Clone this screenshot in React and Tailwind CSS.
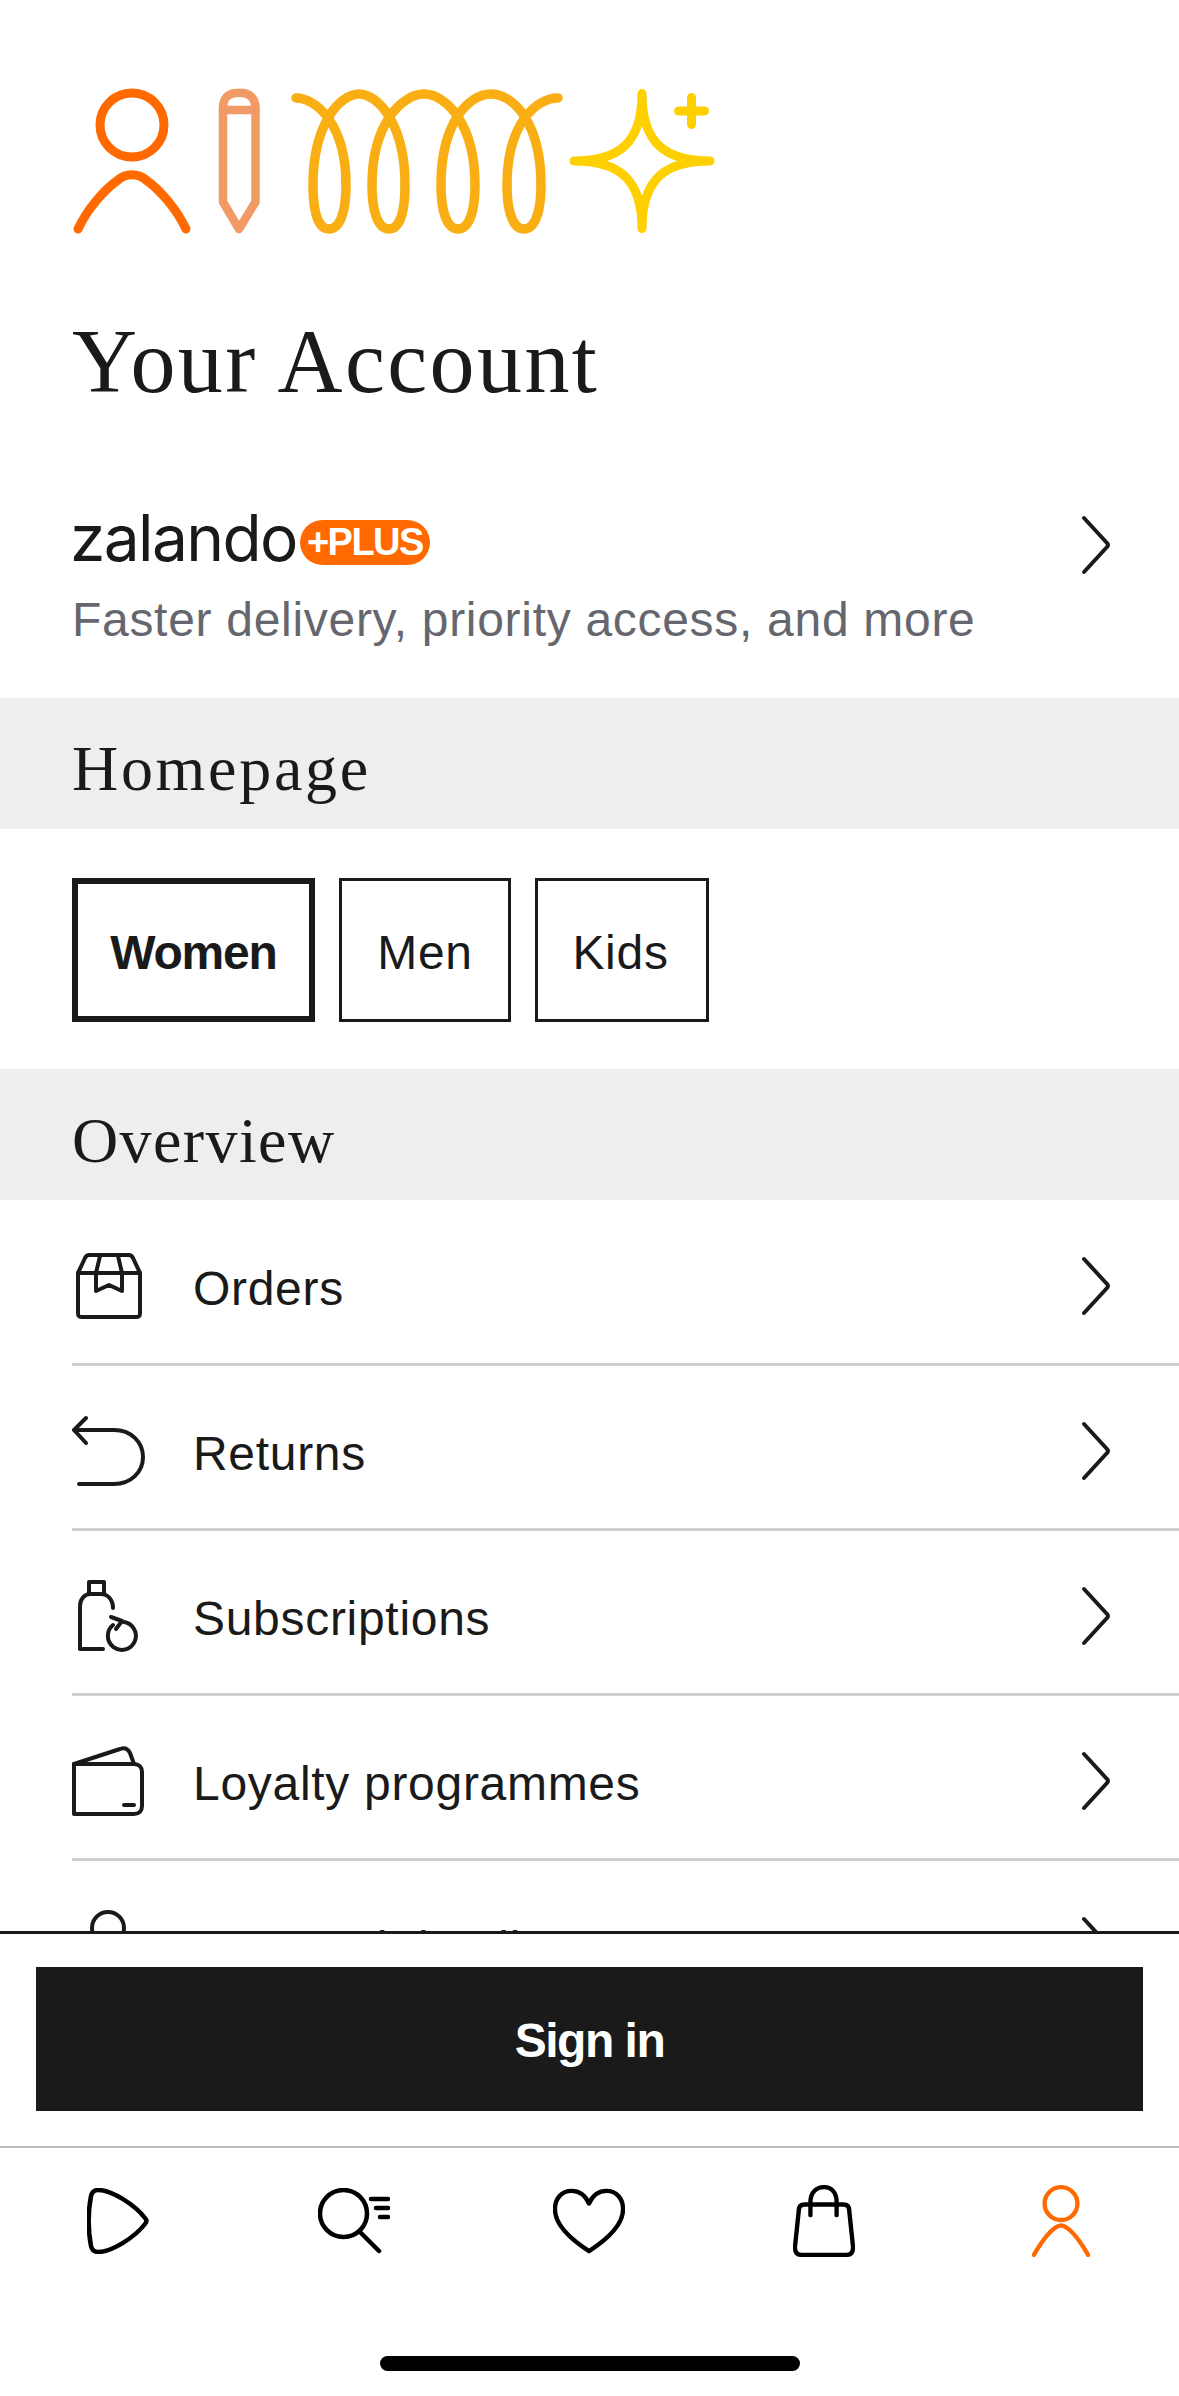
const SANS = 'font-["Liberation_Sans",Arial,sans-serif]';

// Multicolour banner above the title.
const AccountBanner = () => (
  <svg viewBox="0 0 660 160" className="w-[660px] h-[160px] block" fill="none" strokeLinecap="round" strokeLinejoin="round">
    <g stroke="#ff6900" strokeWidth="9">
      <circle cx="60" cy="45" r="32" />
      <path d="M6 149 C16 128 32 110 46 100 C54 93 66 93 74 100 C88 110 104 128 114 149" />
    </g>
    <g stroke="#f29a66" strokeWidth="8.5">
      <path d="M151 28 C151 19 156 13 164 13 L170 13 C178 13 183.500 19 183.500 28 L183.500 122 L167 149 L151 122 Z" />
      <path d="M151 30 L183.500 30" />
    </g>
    <path
      stroke="#f9ae13"
      strokeWidth="9.5"
      d="M224 18 C244 18 274 44 274 105 C274 132 268 149 257 149 C246 149 241 132 241 105 C241 44 268 14 287 14 C306 14 333 44 333 105 C333 132 328 149 317 149 C306 149 300 132 300 105 C300 44 330 14 352 14 C374 14 403 44 403 105 C403 132 397 149 386 149 C375 149 369 132 369 105 C369 44 396 14 419 14 C442 14 469 44 469 105 C469 132 463 149 452 149 C441 149 435 132 435 105 C435 44 464 18 486 18"
    />
    <g stroke="#ffd000" strokeWidth="9">
      <path d="M570 13.500 C570 64 546 81 502 81 C546 81 570 98 570 148.500 C570 98 594 81 638 81 C594 81 570 64 570 13.500 Z" />
      <path d="M619.500 17.500 L619.500 44.500 M606.500 31 L632.500 31" />
    </g>
  </svg>
);

const OrdersIcon = () => (
  <svg viewBox="0 0 66 66" className="w-[66px] h-[66px] ml-[4px]" fill="none" stroke="#1a1a1a" strokeWidth="4" strokeLinecap="round" strokeLinejoin="round">
    <path d="M2 20 L9 5 C10 3 11 2 13 2 L53 2 C55 2 56 3 57 5 L64 20 L64 60 C64 63 63 64 60 64 L6 64 C3 64 2 63 2 60 Z" />
    <path d="M2 20 L64 20 M24 3 L20 20 L20 38 L33 32 L46 38 L46 20 L42 3" />
  </svg>
);

const ReturnsIcon = () => (
  <svg viewBox="0 0 74 72" className="w-[74px] h-[72px]" fill="none" stroke="#1a1a1a" strokeWidth="4" strokeLinecap="round" strokeLinejoin="round">
    <path d="M14 3 L2 15 L14 28 M2 15 L42 15 C59 15 71 27 71 42 C71 57 59 69 42 69 L7 69" />
  </svg>
);

const SubscriptionsIcon = () => (
  <svg viewBox="0 0 62 72" className="w-[62px] h-[72px] ml-[5px]" fill="none" stroke="#1a1a1a" strokeWidth="4" strokeLinecap="round" strokeLinejoin="round">
    <path d="M12 14 L12 2 L27 2 L27 14 M36 28 C36 20 31 14 24 14 L13 14 C7 14 3 20 3 26 L3 69 L26 69" />
    <path d="M47 42 A14 14 0 1 1 36 45" />
    <path d="M34 37 L45 41 L39 49" />
  </svg>
);

const LoyaltyIcon = () => (
  <svg viewBox="0 0 72 70" className="w-[72px] h-[70px]" fill="none" stroke="#1a1a1a" strokeWidth="4" strokeLinecap="round" strokeLinejoin="round">
    <path d="M2 18 L2 68 L62 68 C67 68 70 65 70 60 L70 26 C70 21 67 18 62 18 Z" />
    <path d="M2 18 L48 3 C53 1 56 3 58 7 L62 18 M52 59 L62 59" />
  </svg>
);

const PersonIcon = () => (
  <svg viewBox="0 0 72 72" className="w-[72px] h-[72px]" fill="none" stroke="#1a1a1a" strokeWidth="4" strokeLinecap="round" strokeLinejoin="round">
    <circle cx="36" cy="18" r="16" />
    <path d="M4 70 C10 55 22 42 36 42 C50 42 62 55 68 70" />
  </svg>
);

const rows = [
  { label: 'Orders', Icon: OrdersIcon },
  { label: 'Returns', Icon: ReturnsIcon },
  { label: 'Subscriptions', Icon: SubscriptionsIcon },
  { label: 'Loyalty programmes', Icon: LoyaltyIcon },
  { label: 'Personal details', Icon: PersonIcon },
];

const Chevron = () => (
  <svg viewBox="0 0 32 60" className="w-[32px] h-[60px] shrink-0" fill="none" stroke="#1a1a1a" strokeWidth="4" strokeLinecap="round" strokeLinejoin="round">
    <path d="M4 3 L27 28 Q29 30 27 32 L4 57" />
  </svg>
);

const SectionHeader = ({ children, className }) => (
  <div className={`h-[131px] bg-[#eeeeee] pl-[72px] flex items-center font-["Liberation_Serif",serif] text-[64px] text-[#1a1a1a] ${className}`}>
    {children}
  </div>
);

const TabButton = ({ label, className }) => (
  <button className={`h-[144px] pt-[5px] border-[#1a1a1a] text-[48px] text-[#1a1a1a] ${className}`}>{label}</button>
);

const NavBar = () => (
  <nav className="h-[248px] relative">
    <div className="grid grid-cols-5 h-[146px] items-center justify-items-center">
      <svg viewBox="0 0 62 66" className="w-[62px] h-[66px]" fill="none" stroke="#000" strokeWidth="4.5" strokeLinejoin="round">
        <path d="M11 2 C25 2 48 17 58 30 C60 32 60 34 58 36 C48 49 25 64 11 64 C7 64 5 62 4 58 C1 42 1 24 4 8 C5 4 7 2 11 2 Z" />
      </svg>
      <svg viewBox="0 0 72 66" className="w-[72px] h-[66px]" fill="none" stroke="#000" strokeWidth="4.5" strokeLinecap="round">
        <circle cx="25.500" cy="25.500" r="23.500" />
        <path d="M42 44 L61 63 M53 11 L70 11 M58 20 L70 20 M62 29 L70 29" />
      </svg>
      <svg viewBox="0 0 74 66" className="w-[72px] h-[66px]" fill="none" stroke="#000" strokeWidth="4.5" strokeLinejoin="round">
        <path d="M37 15 C33 6 26 2 19 2 C9 2 2 10 2 21 C2 37 20 53 37 64 C54 53 72 37 72 21 C72 10 65 2 55 2 C48 2 41 6 37 15 Z" />
      </svg>
      <svg viewBox="0 0 64 74" className="w-[62px] h-[72px] mr-[2px]" fill="none" stroke="#000" strokeWidth="4.5" strokeLinecap="round" strokeLinejoin="round">
        <path d="M12 20 L52 20 C56 20 58 22 58 26 L62 64 C62 69 60 72 55 72 L9 72 C4 72 2 69 2 64 L6 26 C6 22 8 20 12 20 Z" />
        <path d="M18 31 L18 17 C18 8 24 2 32 2 C40 2 45 8 45 17 L45 31" />
      </svg>
      <svg viewBox="0 0 60 74" className="w-[58px] h-[72px]" fill="none" stroke="#ff6900" strokeWidth="4.5" strokeLinecap="round">
        <circle cx="30" cy="19" r="17" />
        <path d="M2 72 C9 60 18 48 24 44 C28 41 32 41 36 44 C42 48 51 60 58 72" />
      </svg>
    </div>
    <div className="absolute left-[380px] top-[208px] w-[420px] h-[15px] rounded-full bg-black" />
  </nav>
);

export default function App() {
  return (
    <div className={`${SANS} w-[1179px] h-[2396px] bg-white flex flex-col overflow-hidden text-[#1a1a1a] tracking-[0.7px]`}>
      <main className="flex-1 min-h-0 overflow-hidden">
        <div className="pt-[80px] pl-[72px]">
          <AccountBanner />
        </div>
        <h1 className='pl-[72px] mt-[72px] font-["Liberation_Serif",serif] text-[90px] leading-[100px] tracking-[2.4px]'>
          Your Account
        </h1>

        <div className="mt-[96px] pl-[72px] pr-[67px] flex items-start justify-between">
          <div>
            <div className="flex items-center h-[60px]">
              <span className="ml-[-2px] font-['Inter',sans-serif] text-[64px] tracking-[-1.6px] leading-[60px]">zalando</span>
              <span className="ml-[3px] mt-[8px] h-[45px] w-[130px] rounded-full bg-[#ff6900] text-white font-bold text-[38px] leading-[45px] text-center tracking-[-1.5px]">
                +PLUS
              </span>
            </div>
            <p className="mt-[24px] text-[48px] leading-[56px] text-[#66676e]">Faster delivery, priority access, and more</p>
          </div>
          <div className="mt-[7px]">
            <Chevron />
          </div>
        </div>

        <div className="mt-[50px]">
          <SectionHeader className="pt-[10px] tracking-[2.7px]">Homepage</SectionHeader>
        </div>
        <div className="pt-[49px] pb-[47px] pl-[72px] flex gap-[24px]">
          <TabButton label="Women" className="w-[243px] border-[6px] font-bold tracking-[-1.2px]" />
          <TabButton label="Men" className="w-[172px] border-[3px]" />
          <TabButton label="Kids" className="w-[174px] border-[3px] pr-[3px]" />
        </div>
        <SectionHeader className="pt-[12px] tracking-[1.4px]">Overview</SectionHeader>

        <ul className="pl-[72px] pt-[1px]">
          {rows.map(({ label, Icon }) => (
            <li key={label} className="h-[165px] pt-[8px] border-b-[3px] border-[#cfcfcf] flex items-center">
              <div className="w-[121px] shrink-0">
                <Icon />
              </div>
              <span className="flex-1 pt-[5px] text-[48px]">{label}</span>
              <div className="pr-[67px]">
                <Chevron />
              </div>
            </li>
          ))}
        </ul>
      </main>

      <footer className="shrink-0 bg-white">
        <div className="border-t-[3px] border-[#1a1a1a] h-[215px] px-[36px] pt-[33px]">
          <button className="w-full h-[144px] pt-[4px] bg-[#1a1a1a] text-white font-bold text-[48px] tracking-[-1.5px]">Sign in</button>
        </div>
        <div className="border-t-[2px] border-[#bdbdbd]">
          <NavBar />
        </div>
      </footer>
    </div>
  );
}
